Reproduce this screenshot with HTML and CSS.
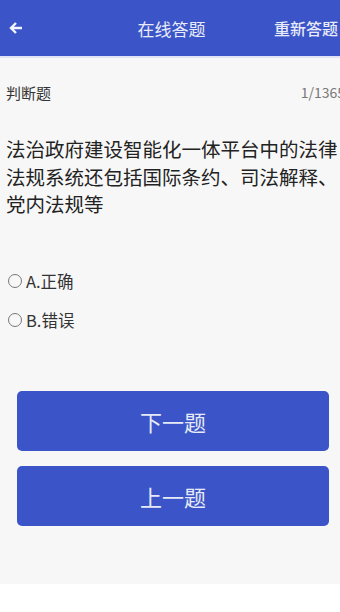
FILE: index.html
```html
<html>
<head>
    <title>在线答题</title>
    <meta charset="utf-8">
    <link rel="stylesheet" href="styles.css">
</head>
<body>
    <div class="screen">
        <div class="topbar">
            <span class="back">
                <svg width="14" height="14" viewBox="0 0 14 14"><path d="M13 7H2M7 2L2 7l5 5" fill="none" stroke="#f2f4fb" stroke-width="2.4"/></svg>
            </span>
            <span class="title">在线答题</span>
            <span class="retry">重新答题</span>
        </div>

        <div class="meta">
            <span class="kind">判断题</span>
            <span class="count">1/1365</span>
        </div>

        <div class="question">法治政府建设智能化一体平台中的法律法规系统还包括国际条约、司法解释、党内法规等</div>

        <div class="options">
            <label class="option"><span class="radio"></span>A.正确</label>
            <label class="option"><span class="radio"></span>B.错误</label>
        </div>

        <div class="actions">
            <button class="btn">下一题</button>
            <button class="btn">上一题</button>
        </div>
    </div>
</body>
</html>
```

FILE: styles.css
```css
body {
    margin: 0;
    background: #fff;
    font-family: "Noto Sans CJK SC", "Noto Sans", sans-serif;
}
.screen {
    height: 584px;
    background: #f7f7f7;
    overflow: hidden;
}
.topbar {
    height: 56px;
    background: #3b55c8;
    border-bottom: 2px solid #dfe3f3;
    display: flex;
    align-items: center;
    color: #e9ecf8;
    position: relative;
}
.back {
    width: 34px;
    padding-left: 9px;
    display: flex;
    align-items: center;
}
.title {
    position: absolute;
    left: 0;
    right: 0;
    text-align: center;
    font-size: 17px;
    padding-left: 3px;
}
.retry {
    margin-left: auto;
    font-size: 16px;
    font-weight: 500;
    margin-right: 2px;
}
.meta {
    display: flex;
    justify-content: space-between;
    align-items: center;
    padding: 22px 0 0 6px;
    height: 24px;
}
.kind {
    font-size: 15px;
    color: #333;
}
.count {
    font-size: 14px;
    color: #777;
    margin-right: -5px;
}
.question {
    padding: 31px 0 0 6px;
    width: 334px;
    font-size: 19.5px;
    line-height: 27.5px;
    color: #222;
}
.options {
    padding: 44px 0 0 8px;
}
.option {
    display: flex;
    align-items: center;
    height: 39px;
    font-size: 16.5px;
    color: #333;
}
.radio {
    width: 12px;
    height: 12px;
    border: 1.5px solid #777;
    border-radius: 50%;
    margin-right: 4px;
}
.actions {
    padding: 51px 11px 0 17px;
    display: flex;
    flex-direction: column;
    gap: 15px;
}
.btn {
    height: 60px;
    border: none;
    border-radius: 5px;
    background: #3b55c8;
    color: #e6eaf7;
    font-family: "Noto Sans CJK SC", sans-serif;
    font-size: 22px;
}
```
